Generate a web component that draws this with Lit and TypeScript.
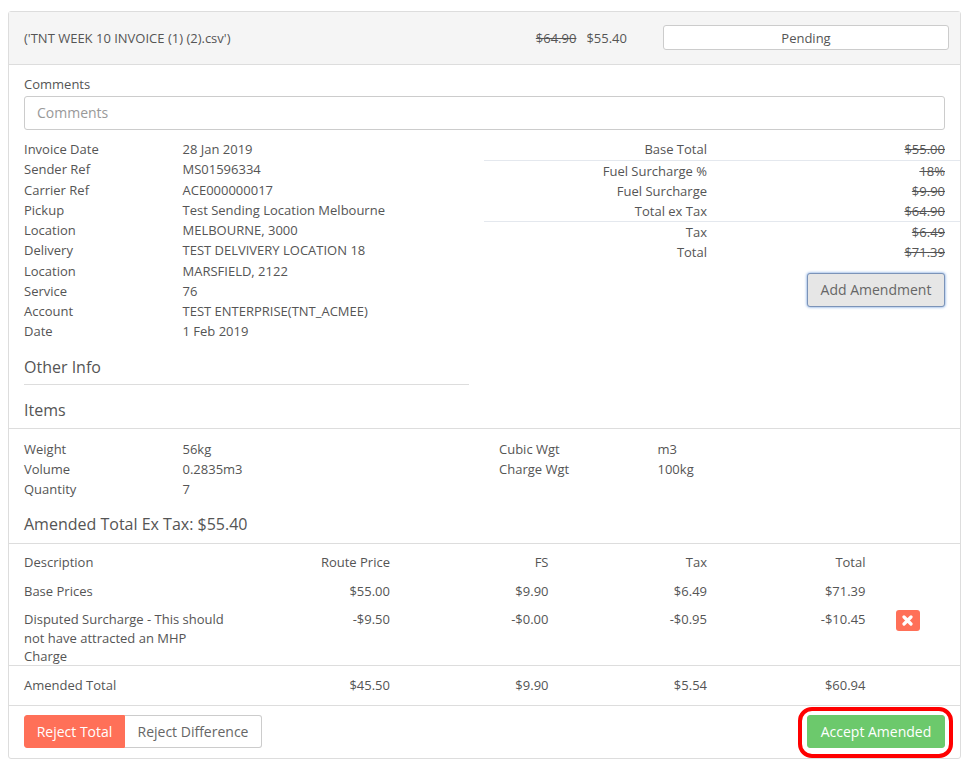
import {LitElement, html, css} from 'lit';
import {customElement} from 'lit/decorators.js';

const details = [
  ['Invoice Date', '28 Jan 2019'],
  ['Sender Ref', 'MS01596334'],
  ['Carrier Ref', 'ACE000000017'],
  ['Pickup', 'Test Sending Location Melbourne'],
  ['Location', 'MELBOURNE, 3000'],
  ['Delivery', 'TEST DELVIVERY LOCATION 18'],
  ['Location', 'MARSFIELD, 2122'],
  ['Service', '76'],
  ['Account', 'TEST ENTERPRISE(TNT_ACMEE)'],
  ['Date', '1 Feb 2019'],
];

const totals = [
  ['Base Total', '$55.00', 'first'],
  ['Fuel Surcharge %', '18%', ''],
  ['Fuel Surcharge', '$9.90', ''],
  ['Total ex Tax', '$64.90', 'rule'],
  ['Tax', '$6.49', ''],
  ['Total', '$71.39', ''],
];

@customElement('app-root')
export class AppRoot extends LitElement {
  static styles = css`
    :host {
      display: block;
      width: 975px;
      height: 769px;
      box-sizing: border-box;
      padding: 11px 14px 0 8px;
      background: #fff;
      font-family: 'Open Sans', sans-serif;
      font-size: 13px;
      line-height: 20.25px;
      color: #555;
    }
    .card {
      height: 748px;
      box-sizing: border-box;
      border: 1px solid #ddd;
      border-radius: 3px;
    }
    .head {
      height: 53px;
      box-sizing: border-box;
      display: flex;
      align-items: center;
      padding: 0 11px 0 15px;
      background: #f5f5f5;
      border-bottom: 1px solid #ddd;
    }
    .file { flex: 1; }
    .old { text-decoration: line-through; }
    .new { margin: 0 36px 0 10px; }
    .status {
      width: 286px;
      height: 25px;
      margin-bottom: 2px;
      box-sizing: border-box;
      border: 1px solid #ccc;
      border-radius: 3px;
      background: #fff;
      text-align: center;
      line-height: 24px;
    }
    .comments { padding: 9px 15px 0; }
    .comments label { display: block; height: 22px; }
    .input {
      height: 34px;
      box-sizing: border-box;
      border: 1px solid #ccc;
      border-radius: 3px;
      padding: 0 12px;
      font-size: 14px;
      line-height: 32px;
      color: #999;
    }
    .info { display: flex; padding-top: 9px; }
    .left { width: 475px; flex: none; padding-left: 15px; box-sizing: border-box; }
    .kv { display: grid; grid-template-columns: 158.5px 1fr; }
    .other {
      margin: 14px 15px 0 0;
      padding-bottom: 6px;
      border-bottom: 1px solid #ddd;
      font-size: 16px;
      line-height: 22px;
    }
    .right { flex: 1; }
    .total {
      display: grid;
      grid-template-columns: 223px 1fr;
      padding-right: 15px;
      text-align: right;
      line-height: 20px;
    }
    .total.first { border-bottom: 1px solid #e4e8ee; padding-bottom: 1px; }
    .total.rule { border-bottom: 1px solid #e4e8ee; }
    .total s { text-decoration: line-through; }
    .add-row { display: flex; justify-content: flex-end; padding: 11px 15px 0 0; }
    .add {
      width: 138px;
      height: 34px;
      box-sizing: border-box;
      border: 1px solid #7b93b8;
      border-radius: 3px;
      background: #e6e6e6;
      box-shadow: 0 0 3px #5b8fd6;
      font: inherit;
      font-size: 14px;
      color: #666;
      padding: 0;
    }
    .section {
      height: 29px;
      margin-top: 14px;
      padding-left: 15px;
      border-bottom: 1px solid #ddd;
      font-size: 16px;
      line-height: 22px;
    }
    .items { display: flex; padding: 10.25px 0 0 15px; }
    .items .kv { width: 475px; }
    .amended {
      height: 30px;
      margin-top: 13.75px;
      padding-left: 15px;
      border-bottom: 1px solid #ddd;
      font-size: 16px;
      line-height: 22px;
    }
    .row {
      display: grid;
      grid-template-columns: 207.5px repeat(4, 158.5px) 1fr;
      padding-left: 15px;
    }
    .row > .num { text-align: right; }
    .row.desc { padding-top: 8px; height: 37px; box-sizing: border-box; }
    .row.base { height: 29px; }
    .row.disputed { height: 55px; line-height: 18.25px; border-bottom: 1px solid #ddd; }
    .row.sum { height: 40px; padding-top: 9px; box-sizing: border-box; border-bottom: 1px solid #ddd; }
    .del {
      width: 24px;
      height: 21px;
      margin: 0 0 0 30px;
      border: none;
      border-radius: 3px;
      background: #ff7058;
      padding: 0;
      display: flex;
      align-items: center;
      justify-content: center;
    }
    .foot {
      display: flex;
      justify-content: space-between;
      padding: 9px 15px 0;
    }
    .group { display: flex; height: 33px; }
    .group button {
      box-sizing: border-box;
      font: inherit;
      font-size: 14px;
      padding: 0;
      border-radius: 3px 0 0 3px;
    }
    .reject {
      width: 101px;
      border: 1px solid #ff7058;
      background: #ff7058;
      color: #fff;
    }
    .diff {
      width: 137px;
      border: 1px solid #ccc !important;
      border-left: none !important;
      border-radius: 0 3px 3px 0 !important;
      background: #fff;
      color: #666;
    }
    .accept-wrap { position: relative; }
    .accept {
      width: 138px;
      height: 33px;
      border: 1px solid #6cc96c;
      border-radius: 3px;
      background: #6cc96c;
      color: #fff;
      font: inherit;
      font-size: 14px;
      padding: 0;
    }
    .ring {
      position: absolute;
      left: -9px;
      right: -8px;
      top: -8px;
      bottom: -10px;
      border: 4px solid #f00;
      border-radius: 14px;
    }
  `;

  render() {
    return html`
      <div class="card">
        <div class="head">
          <span class="file">('TNT WEEK 10 INVOICE (1) (2).csv')</span>
          <span class="old">$64.90</span>
          <span class="new">$55.40</span>
          <span class="status">Pending</span>
        </div>
        <div class="comments">
          <label>Comments</label>
          <div class="input">Comments</div>
        </div>
        <div class="info">
          <div class="left">
            <div class="kv">
              ${details.map(([k, v]) => html`<span>${k}</span><span>${v}</span>`)}
            </div>
            <div class="other">Other Info</div>
          </div>
          <div class="right">
            ${totals.map(
              ([k, v, cls]) => html`
                <div class="total ${cls}">
                  <span>${k}</span><s>${v}</s>
                </div>
              `
            )}
            <div class="add-row"><button class="add">Add Amendment</button></div>
          </div>
        </div>
        <div class="section">Items</div>
        <div class="items">
          <div>
            <div class="kv"><span>Weight</span><span>56kg</span></div>
            <div class="kv"><span>Volume</span><span>0.2835m3</span></div>
            <div class="kv"><span>Quantity</span><span>7</span></div>
          </div>
          <div>
            <div class="kv"><span>Cubic Wgt</span><span>m3</span></div>
            <div class="kv"><span>Charge Wgt</span><span>100kg</span></div>
          </div>
        </div>
        <div class="amended">Amended Total Ex Tax: $55.40</div>
        <div class="row desc">
          <span>Description</span><span class="num">Route Price</span>
          <span class="num">FS</span><span class="num">Tax</span>
          <span class="num">Total</span><span></span>
        </div>
        <div class="row base">
          <span>Base Prices</span><span class="num">$55.00</span>
          <span class="num">$9.90</span><span class="num">$6.49</span>
          <span class="num">$71.39</span><span></span>
        </div>
        <div class="row disputed">
          <span>Disputed Surcharge - This should not have attracted an MHP Charge</span>
          <span class="num">-$9.50</span><span class="num">-$0.00</span>
          <span class="num">-$0.95</span><span class="num">-$10.45</span>
          <span>
            <button class="del" aria-label="Remove">
              <svg width="11" height="11" viewBox="0 0 11 11">
                <path d="M2 2L9 9M9 2L2 9" stroke="#fff" stroke-width="3.2" stroke-linecap="round"/>
              </svg>
            </button>
          </span>
        </div>
        <div class="row sum">
          <span>Amended Total</span><span class="num">$45.50</span>
          <span class="num">$9.90</span><span class="num">$5.54</span>
          <span class="num">$60.94</span><span></span>
        </div>
        <div class="foot">
          <div class="group">
            <button class="reject">Reject Total</button>
            <button class="diff">Reject Difference</button>
          </div>
          <div class="accept-wrap">
            <button class="accept">Accept Amended</button>
            <div class="ring"></div>
          </div>
        </div>
      </div>
    `;
  }
}
